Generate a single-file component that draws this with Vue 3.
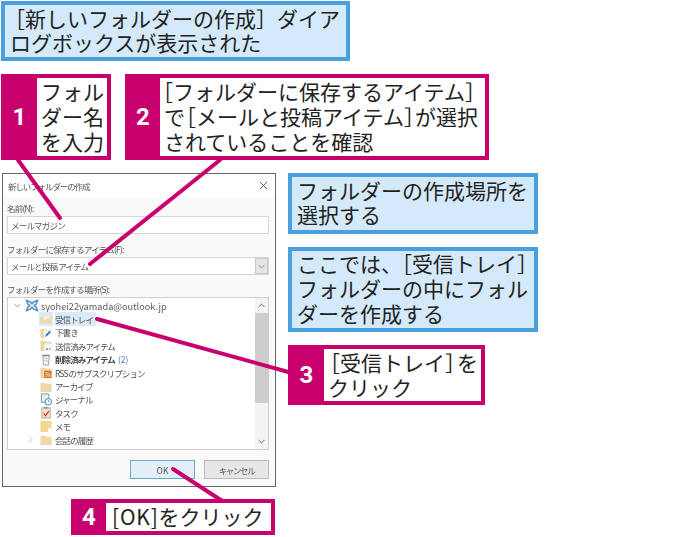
<template>
  <div class="page">
    <!-- Dialog screenshot -->
    <div class="dialog">
      <div class="dialog__title">
        <span>新しいフォルダーの作成</span>
        <svg class="dialog__close" viewBox="0 0 10 10" fill="none" stroke="#444" stroke-width="0.9">
          <path d="M1 1l8 8M9 1l-8 8" />
        </svg>
      </div>

      <div class="dialog__body">
        <label class="field-label field-label--first">名前(N):</label>
        <div class="input">メールマガジン</div>

        <label class="field-label">フォルダーに保存するアイテム(F):</label>
        <div class="input input--select">
          <span>メールと投稿 アイテム</span>
          <span class="select-btn">
            <svg viewBox="0 0 10 6" fill="none" stroke="#777" stroke-width="1"><path d="M1 1l4 4 4-4" /></svg>
          </span>
        </div>

        <label class="field-label field-label--third">フォルダーを作成する場所(S):</label>
        <div class="tree">
          <div class="tree__list">
            <div class="row row--account">
              <svg class="twisty" viewBox="0 0 10 6" fill="none" stroke="#666" stroke-width="1"><path d="M1 1l4 4 4-4" /></svg>
              <svg class="row__icon" viewBox="0 0 14 14" fill="#dcecf8" stroke="#3b7fc4" stroke-width="1.3">
                <path d="M1 1.500l4 1.500 2 2 2-2 4-1.500-1.500 4-2 1.500 2 1.500 1.500 4-4-1.500-2-2-2 2-4 1.500 1.500-4 2-1.500-2-1.500z" />
              </svg>
              <span>syohei22yamada@outlook.jp</span>
            </div>

            <div v-for="item in folders" :key="item.name" class="row" :class="{ 'row--selected': item.selected }">
              <svg v-if="item.more" class="twisty twisty--closed" viewBox="0 0 6 10" fill="none" stroke="#aaa" stroke-width="1"><path d="M1 1l4 4-4 4" /></svg>
              <svg class="row__icon" viewBox="0 0 14 14">
                <template v-if="item.icon === 'inbox'">
                  <path d="M1 5h6l1-1h5v8H1z" fill="#f0d9a8" />
                  <path d="M3 6l7-3 2 3-7 3z" fill="#f8ecd2" />
                </template>
                <template v-else-if="item.icon === 'draft'">
                  <path d="M1 3h5l1 1h5v9H1z" fill="#efd8a6" />
                  <path d="M5 5h8v8H5z" fill="#fff" />
                  <path d="M6 12l1-3 4-4 1.500 1.500-4 4z" fill="#2a7cc7" />
                </template>
                <template v-else-if="item.icon === 'sent'">
                  <path d="M1 2h5l1 1h6v10H1z" fill="#efd8a6" />
                  <path d="M5 5h8v8H5z" fill="#f2f4f6" />
                  <path d="M7 10h2v2H7zM10 10h2v1h-2z" fill="#7d98b3" />
                </template>
                <template v-else-if="item.icon === 'trash'">
                  <path d="M3.500 3h7l-.8 10H4.300z" fill="#f4f4f4" stroke="#8a8a8a" stroke-width="0.8" />
                  <path d="M3 2.500h8" stroke="#777" stroke-width="1.200" />
                  <path d="M5 6h4M5 8.500h4" stroke="#b5b5b5" stroke-width="0.8" />
                </template>
                <template v-else-if="item.icon === 'rss'">
                  <path d="M1 2h5l1 1h6v10H1z" fill="#efd8a6" />
                  <path d="M5 5h8v8H5z" fill="#d9782b" />
                  <path d="M6.500 11.500h1M6.500 9c2 0 3 1 3 2.500M6.500 7c3 0 5 2 5 4.500" stroke="#fff" stroke-width="0.8" fill="none" />
                </template>
                <template v-else-if="item.icon === 'journal'">
                  <path d="M2 1h8v9H2z" fill="#e6f1ee" stroke="#4f9a8c" stroke-width="0.9" />
                  <circle cx="9.500" cy="9.500" r="3.500" fill="#fff" stroke="#2f7fc1" stroke-width="1" />
                  <path d="M9.500 7.500v2h1.500" stroke="#2f7fc1" stroke-width="0.8" fill="none" />
                </template>
                <template v-else-if="item.icon === 'task'">
                  <path d="M2.500 2h9v11h-9z" fill="#f0e3cf" stroke="#a89274" stroke-width="0.8" />
                  <path d="M5 1h4v2H5z" fill="#9a9a9a" />
                  <path d="M4.500 8l2 2.500 3.500-5" stroke="#d12b2b" stroke-width="1.200" fill="none" />
                </template>
                <template v-else-if="item.icon === 'memo'">
                  <path d="M1 1h12v8l-4 4H1z" fill="#f1d890" />
                  <path d="M9 13V9h4z" fill="#fff" />
                </template>
                <path v-else d="M1 3h5l1 1h6v9H1z" fill="#efd8a6" />
              </svg>
              <span :class="{ 'row__bold': item.bold }">{{ item.name }}</span>
              <span v-if="item.count" class="row__count">({{ item.count }})</span>
            </div>
          </div>

          <div class="scrollbar">
            <svg class="scrollbar__arrow" viewBox="0 0 10 6" fill="none" stroke="#555" stroke-width="1.200"><path d="M1 5l4-4 4 4" /></svg>
            <div class="scrollbar__track"><div class="scrollbar__thumb"></div></div>
            <svg class="scrollbar__arrow" viewBox="0 0 10 6" fill="none" stroke="#555" stroke-width="1.200"><path d="M1 1l4 4 4-4" /></svg>
          </div>
        </div>

        <div class="dialog__actions">
          <button type="button" class="btn btn--primary">OK</button>
          <button type="button" class="btn">キャンセル</button>
        </div>
      </div>
    </div>

    <!-- Leader lines from the callouts into the dialog -->
    <svg class="leaders" viewBox="0 0 681 537" fill="none" stroke="#c8006e" stroke-width="4" stroke-linecap="round">
      <path d="M18 160L60 218" />
      <path d="M220 160L90 264" />
      <path d="M97 319L292 373" />
      <path d="M173 469L230 506" />
    </svg>

    <!-- Notes -->
    <div class="note note--top">［新しいフォルダーの作成］ダイア<br />ログボックスが表示された</div>
    <div class="note note--place">フォルダーの作成場所を<br />選択する</div>
    <div class="note note--inbox">ここでは<span class="tight-11">、</span>［受信トレイ］<br />フォルダーの中にフォル<br />ダーを作成する</div>

    <!-- Steps -->
    <div class="step step--1">
      <span class="step__num">1</span>
      <div class="step__text">フォル<br />ダー名<br />を入力</div>
    </div>
    <div class="step step--2">
      <span class="step__num">2</span>
      <div class="step__text step__text--hang">［フォルダーに保存するアイテム］<br /><span class="tight-10">で</span>［メールと投稿アイテム<span class="tight-10">］</span>が選択<br />されていることを確認</div>
    </div>
    <div class="step step--3">
      <span class="step__num">3</span>
      <div class="step__text step__text--hang-small">［受信トレイ<span class="tight-9">］</span>を<br />クリック</div>
    </div>
    <div class="step step--4">
      <span class="step__num">4</span>
      <div class="step__text"><span class="ok">[OK]</span>をクリック</div>
    </div>
  </div>
</template>

<script setup>
const folders = [
  { name: '受信トレイ', icon: 'inbox', selected: true },
  { name: '下書き', icon: 'draft' },
  { name: '送信済みアイテム', icon: 'sent' },
  { name: '削除済みアイテム', icon: 'trash', bold: true, count: 2 },
  { name: 'RSS のサブスクリプション', icon: 'rss' },
  { name: 'アーカイブ', icon: 'folder' },
  { name: 'ジャーナル', icon: 'journal' },
  { name: 'タスク', icon: 'task' },
  { name: 'メモ', icon: 'memo' },
  { name: '会話の履歴', icon: 'folder', more: true },
]
</script>

<style>
body {
  margin: 0;
  background: #ffffff;
}
</style>

<style scoped>
.page {
  position: relative;
  width: 681px;
  height: 537px;
  overflow: hidden;
  background: #ffffff;
  font-family: 'Noto Sans CJK JP', 'Noto Sans', sans-serif;
  color: #222222;
  text-spacing-trim: space-all;
}

/* Dialog */
.dialog {
  position: absolute;
  left: 2px;
  top: 173px;
  width: 274px;
  height: 314px;
  box-sizing: border-box;
  display: flex;
  flex-direction: column;
  border: 1px solid #666666;
  background: #ffffff;
  font-size: 8.500px;
  letter-spacing: -0.8px;
  color: #555555;
  filter: blur(0.3px);
}

.dialog__title {
  display: flex;
  align-items: center;
  justify-content: space-between;
  height: 23px;
  flex-shrink: 0;
  padding: 0 7px 0 5px;
  letter-spacing: -1.100px;
}

.dialog__close {
  width: 9px;
  height: 9px;
}

.dialog__body {
  flex: 1;
  display: flex;
  flex-direction: column;
  padding: 0 6px 0 4px;
  background: #f9f9f9;
}

.field-label {
  display: block;
  height: 14px;
  margin-top: 8px;
  line-height: 14px;
}

.field-label--first {
  margin-top: 4px;
}

.field-label--third {
  margin-top: 7px;
}

.input {
  display: flex;
  align-items: center;
  justify-content: space-between;
  height: 18px;
  flex-shrink: 0;
  margin-top: 1px;
  box-sizing: border-box;
  padding-left: 3px;
  border: 1px solid #d5d5d5;
  background: #ffffff;
}

.select-btn {
  display: flex;
  align-items: center;
  justify-content: center;
  width: 13px;
  height: 16px;
  border: 1px solid #c8c8c8;
  box-sizing: border-box;
  background: #e4e4e4;
}

.select-btn svg {
  width: 7px;
  height: 5px;
}

.tree {
  display: flex;
  height: 153px;
  flex-shrink: 0;
  box-sizing: border-box;
  margin-top: 1px;
  border: 1px solid #cfcfcf;
  background: #ffffff;
}

.tree__list {
  flex: 1;
  padding-top: 1px;
  overflow: hidden;
}

.row {
  position: relative;
  display: flex;
  align-items: center;
  height: 13.400px;
  padding-left: 31px;
  white-space: nowrap;
  color: #505050;
  letter-spacing: -0.9px;
}

.row--account {
  padding-left: 6px;
  color: #5a5a5a;
  font-size: 9.200px;
  letter-spacing: 0;
}

.row--selected span {
  background: #d9ebf8;
  align-self: stretch;
  display: flex;
  align-items: center;
  padding-right: 3px;
}

.row--selected .row__icon {
  background: #d9ebf8;
  height: 100%;
}

.row__icon {
  width: 14px;
  height: 13px;
  flex-shrink: 0;
  margin-right: 2px;
}

.row__bold {
  font-weight: 700;
  color: #444444;
}

.row__count {
  margin-left: 3px;
  letter-spacing: 0;
  color: #5b7fb0;
}

.twisty {
  position: absolute;
  left: 5px;
  top: 4px;
  width: 7px;
  height: 5px;
}

.twisty--closed {
  left: 20px;
  top: 3px;
  width: 5px;
  height: 7px;
}

.row--account .twisty {
  position: static;
  margin-right: 4px;
}

.scrollbar {
  display: flex;
  flex-direction: column;
  align-items: center;
  width: 13px;
  flex-shrink: 0;
  background: #f3f3f3;
}

.scrollbar__arrow {
  width: 7px;
  height: 5px;
  margin: 5px 0;
  flex-shrink: 0;
}

.scrollbar__track {
  flex: 1;
  width: 100%;
}

.scrollbar__thumb {
  height: 90px;
  background: #cdcdcd;
}

.dialog__actions {
  display: flex;
  justify-content: flex-end;
  gap: 9px;
  margin-top: 10px;
}

.btn {
  width: 65px;
  height: 19px;
  padding: 0;
  box-sizing: border-box;
  border: 1px solid #bcbcbc;
  background: #e6e6e6;
  font: inherit;
  letter-spacing: -1.400px;
  color: #555555;
}

.btn--primary {
  border-color: #6aa8d4;
  background: #e3eef6;
  letter-spacing: 0;
}

/* Leader lines */
.leaders {
  position: absolute;
  left: 0;
  top: 0;
  width: 681px;
  height: 537px;
}

/* Blue notes */
.note {
  position: absolute;
  box-sizing: border-box;
  border: 4px solid #4a9fdd;
  background: #d4e9f9;
  padding-left: 5px;
  font-size: 21px;
  line-height: 24px;
  white-space: nowrap;
}

.note--top {
  left: 1px;
  top: 1px;
  width: 349px;
  height: 60px;
  padding-top: 1px;
  text-indent: -6px;
}

.note--place {
  left: 288px;
  top: 173px;
  width: 250px;
  height: 61px;
  padding-top: 1px;
}

.note--inbox {
  left: 288px;
  top: 247px;
  width: 250px;
  height: 85px;
  line-height: 25px;
}

.tight-9 {
  letter-spacing: -9px;
}

.tight-10 {
  letter-spacing: -10px;
}

.tight-11 {
  letter-spacing: -11px;
}

/* Numbered steps */
.step {
  position: absolute;
  display: flex;
  box-sizing: border-box;
  border: 4px solid #c8006e;
  background: #c8006e;
}

.step__num {
  display: flex;
  align-items: center;
  justify-content: center;
  width: 32px;
  padding-right: 3px;
  box-sizing: border-box;
  flex-shrink: 0;
  color: #ffffff;
  font-family: 'Roboto', 'Liberation Sans', sans-serif;
  font-size: 24px;
  font-weight: 700;
}

.step__text {
  flex: 1;
  min-width: 0;
  background: #ffffff;
  padding-left: 4px;
  padding-top: 1px;
  font-size: 21px;
  line-height: 25px;
  white-space: nowrap;
}

.step__text--hang {
  text-indent: -12px;
}

.step__text--hang-small {
  text-indent: -9px;
}

.step--1 {
  left: 1px;
  top: 74px;
  width: 110px;
  height: 86px;
}

.step--2 {
  left: 125px;
  top: 74px;
  width: 364px;
  height: 86px;
}

.step--2 .step__num,
.step--4 .step__num {
  width: 31px;
}

.step--3 {
  left: 288px;
  top: 345px;
  width: 197px;
  height: 60px;
}

.step--4 {
  left: 71px;
  top: 499px;
  width: 204px;
  height: 36px;
}

.step--4 .step__text {
  padding: 0 0 0 6px;
  line-height: 26px;
}

.ok {
  letter-spacing: 0.8px;
}
</style>
